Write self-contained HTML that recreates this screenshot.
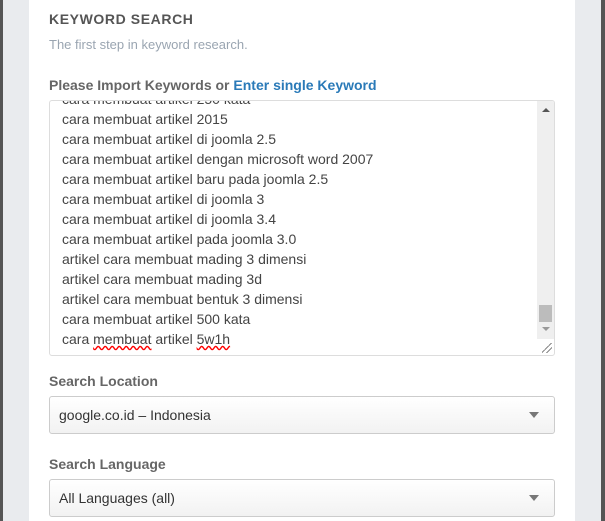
<!DOCTYPE html>
<html><head><style>
body{margin:0;width:605px;height:521px;overflow:hidden;background:#e9ebee;font-family:"Liberation Sans",Arial,sans-serif;position:relative}
.ls{position:absolute;left:0;top:0;width:3px;height:521px;background:#555}
.rs{position:absolute;right:0;top:0;width:4px;height:521px;background:#555}
.panel{position:absolute;left:29px;top:0;width:546px;height:521px;background:#fff}
.abs{position:absolute}
h1{position:absolute;left:49px;top:11px;margin:0;font-size:14px;font-weight:bold;color:#555;letter-spacing:0.6px}
.sub{left:49px;top:37px;font-size:13px;color:#9aa5b1}
.lbl{left:49px;font-size:14px;font-weight:bold;color:#666}
.lbl a{color:#2a7ab8}
.ta{left:49px;top:100px;width:504px;height:254px;border:1px solid #ddd;border-radius:3px;overflow:hidden;background:#fff}
.lines{position:absolute;left:12px;top:-12px;font-size:14px;line-height:20px;color:#444;white-space:nowrap}
.sb{position:absolute;right:0;top:0;width:17px;height:238px;background:#efefef}
.thumb{position:absolute;left:2px;top:204px;width:13px;height:17px;background:#bcbcbc}
.sel{left:49px;width:504px;height:36px;border:1px solid #ccc;border-radius:3px;background:linear-gradient(#fff,#f2f2f2);font-size:14px;color:#333;line-height:36px;text-indent:9px}
.sel:after{content:"";position:absolute;right:15px;top:15px;border:5px solid transparent;border-top:6px solid #777;border-bottom:0}
</style></head><body>
<div class="ls"></div><div class="rs"></div>
<div class="panel"></div>
<h1>KEYWORD SEARCH</h1>
<div class="abs sub">The first step in keyword research.</div>
<div class="abs lbl" style="top:77px">Please Import Keywords or <a>Enter single Keyword</a></div>
<div class="abs ta">
<div class="lines">cara membuat artikel 250 kata<br>cara membuat artikel 2015<br>cara membuat artikel di joomla 2.5<br>cara membuat artikel dengan microsoft word 2007<br>cara membuat artikel baru pada joomla 2.5<br>cara membuat artikel di joomla 3<br>cara membuat artikel di joomla 3.4<br>cara membuat artikel pada joomla 3.0<br>artikel cara membuat mading 3 dimensi<br>artikel cara membuat mading 3d<br>artikel cara membuat bentuk 3 dimensi<br>cara membuat artikel 500 kata<br>cara <span style="text-decoration:underline wavy red">membuat</span> artikel <span style="text-decoration:underline wavy red">5w1h</span></div>
<div class="sb"><div style="position:absolute;left:5px;top:7px;border:4px solid transparent;border-bottom:4px solid #555;border-top:0"></div><div class="thumb"></div><div style="position:absolute;left:5px;top:226px;border:4px solid transparent;border-top:4px solid #999;border-bottom:0"></div></div>
<div style="position:absolute;right:2px;bottom:2px;width:10px;height:10px;background:linear-gradient(135deg,transparent 45%,#888 45%,#888 52%,transparent 52%,transparent 70%,#888 70%,#888 77%,transparent 77%)"></div>
</div>
<div class="abs lbl" style="top:373px">Search Location</div>
<div class="abs sel" style="top:396px">google.co.id – Indonesia</div>
<div class="abs lbl" style="top:456px">Search Language</div>
<div class="abs sel" style="top:479px">All Languages (all)</div>
</body></html>
